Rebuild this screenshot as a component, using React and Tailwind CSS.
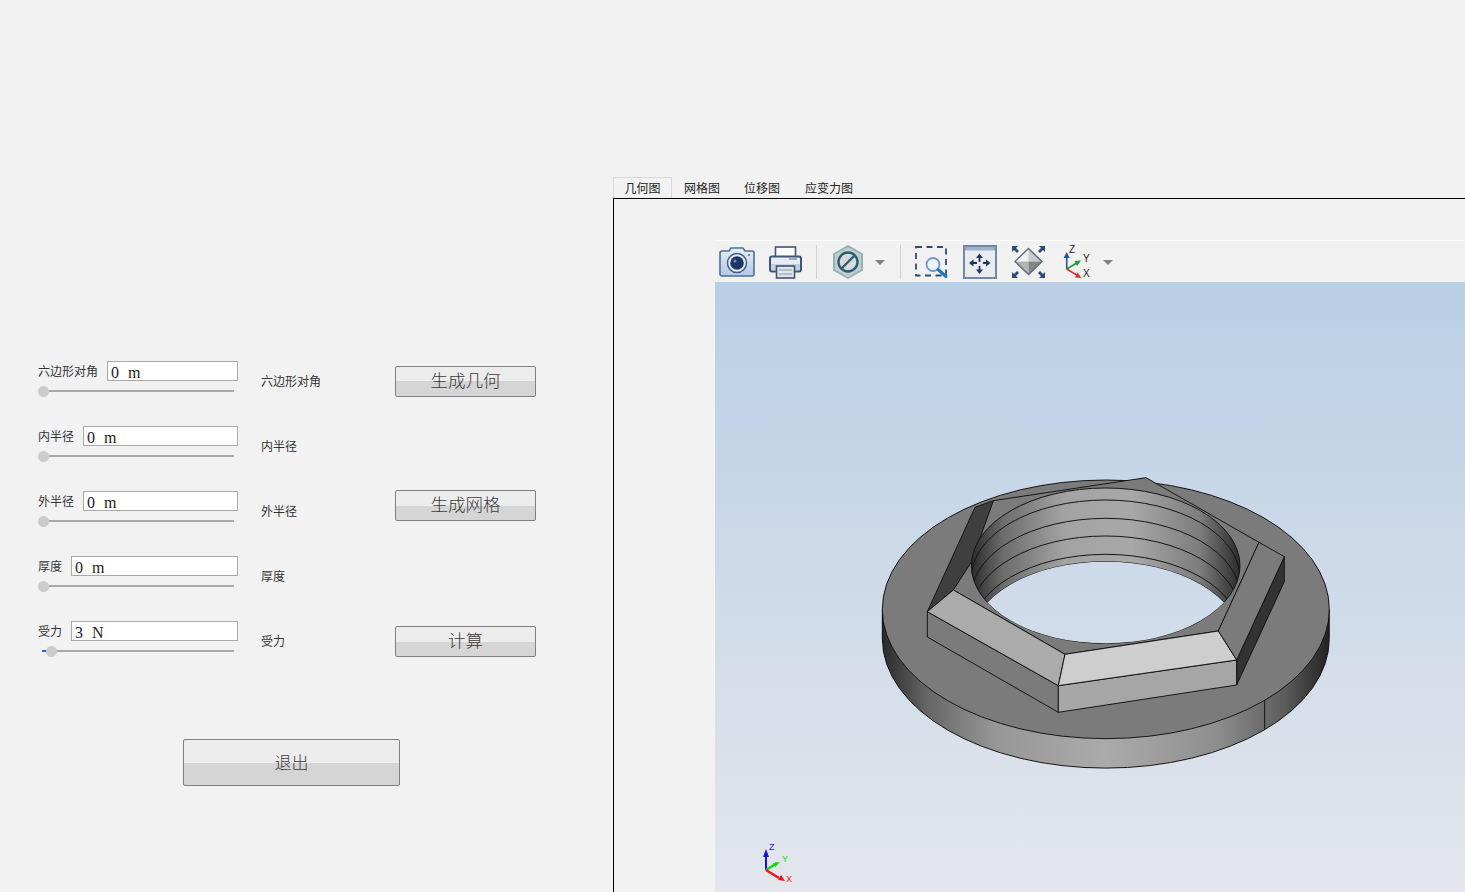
const cjk = "font-['Noto_Sans_CJK_SC','Noto_Sans',sans-serif]";

function Param({ label, value, thumb = false }) {
  return (
    <div className="h-[65px] w-[200px]">
      <div className="flex items-center gap-[9px] h-[20px]">
        <span className={`${cjk} text-[12px] leading-[20px] text-[#333] whitespace-nowrap`}>{label}</span>
        <div className="flex-1 h-[20px] bg-white border border-[#a9a9a9] pl-[3px] pt-[1px] font-['Liberation_Serif',serif] text-[16px] leading-[20px] text-[#222] [word-spacing:5px]">{value}</div>
      </div>
      <div className="relative h-[2px] mt-[9px] ml-[4px] w-[192px] bg-[#a9a9a9]">
        {thumb ? <div className="absolute left-0 top-0 h-[2px] w-[6px] bg-[#1f6fbf]" /> : null}
        <div className={`absolute top-[-4px] h-[11px] w-[11px] rounded-full bg-[#cccccc] ${thumb ? "left-[4px]" : "left-[-4px]"}`} />
      </div>
    </div>
  );
}

function Caption({ children }) {
  return (
    <div className={`${cjk} h-[65px] pt-[10px] text-[12px] leading-[20px] text-[#333] whitespace-nowrap`}>{children}</div>
  );
}

function Btn({ children, cls, text = "text-[17.5px]" }) {
  return (
    <button className={`${cjk} ${cls} ${text} font-light block rounded-[2px] border border-[#808080] pb-[2px] bg-[linear-gradient(#ececec_50%,#d5d5d5_50%)] text-[#3a3a3a]`}>{children}</button>
  );
}

function Arrow({ x = "" }) {
  return (
    <svg width="12" height="36" viewBox="0 0 12 36" className={x}>
      <path d="M1 16h10l-5 5z" fill="#808080" />
    </svg>
  );
}

function Camera() {
  return (
    <svg width="40" height="36" viewBox="717 243 40 36" className="ml-[2px]">
      <defs>
        <linearGradient id="cam" x1="0" y1="0" x2="0" y2="1"><stop offset="0" stopColor="#e6edf6" /><stop offset="1" stopColor="#b4c8e2" /></linearGradient>
      </defs>
      <path d="M729 250l2-3h12l2 3h7a2 2 0 0 1 2 2v21a2 2 0 0 1-2 2h-30a2 2 0 0 1-2-2v-21a2 2 0 0 1 2-2z" fill="url(#cam)" stroke="#4f6f96" strokeWidth="1.6" />
      <circle cx="737" cy="262" r="9.500" fill="#e8eef6" stroke="#3f5c88" strokeWidth="1.500" />
      <circle cx="737" cy="262" r="6.800" fill="#1d3768" />
      <circle cx="735" cy="260" r="1.500" fill="#6f8fc0" />
      <circle cx="749" cy="254" r="1" fill="#4f6f96" />
    </svg>
  );
}

function Printer() {
  return (
    <svg width="40" height="36" viewBox="765 243 40 36" className="ml-[8px]">
      <rect x="775.500" y="246" width="20" height="10" fill="#fff" stroke="#3f5478" strokeWidth="1.600" />
      <rect x="770" y="255.500" width="31" height="15" rx="2" fill="#e6ebf1" stroke="#3f5478" strokeWidth="2" />
      <path d="M771 263h29v6h-29z" fill="#c5d0de" />
      <rect x="776.500" y="265" width="18" height="12" fill="#dfe4ea" stroke="#3f5478" strokeWidth="1.600" />
      <path d="M779 269h13M779 273h13" stroke="#8a98ad" strokeWidth="1.200" />
      <path d="M789 258h8" stroke="#7f8ea6" strokeWidth="1.400" />
    </svg>
  );
}

function Forbid() {
  return (
    <svg width="40" height="36" viewBox="828 243 40 36" className="ml-[11px]">
      <path d="M848 245l14 8v16l-14 8-14-8v-16z" fill="#c4cdd0" stroke="#92b3b8" strokeWidth="2" strokeLinejoin="round" />
      <circle cx="848" cy="261" r="9.500" fill="#d6dcde" stroke="#2c5f6b" strokeWidth="2.400" />
      <path d="M841.500 267.500l13-13" stroke="#2c5f6b" strokeWidth="2.400" />
    </svg>
  );
}

function ZoomBox() {
  return (
    <svg width="40" height="36" viewBox="911 243 40 36" className="ml-[10px]">
      <rect x="916" y="246" width="30" height="28.500" fill="none" stroke="#2d4a78" strokeWidth="1.800" strokeDasharray="6 4.500" />
      <circle cx="933" cy="263.500" r="6.500" fill="#eef3f8" stroke="#6d9ac6" strokeWidth="1.800" />
      <path d="M938 268.500l8 7" stroke="#1a78c2" strokeWidth="3" strokeLinecap="round" />
    </svg>
  );
}

function Pan() {
  return (
    <svg width="40" height="36" viewBox="960 243 40 36" className="ml-[9px]">
      <rect x="964" y="245" width="32" height="32" fill="#e9edf2" stroke="#7488a4" strokeWidth="2" />
      <rect x="965" y="246" width="30" height="3.500" fill="#9fb2ca" />
      <path d="M979.500 256v5M979.500 265v5M973 262h4M983 262h4" stroke="#1f3a5f" strokeWidth="1.800" />
      <path d="M979.500 252.500l-3.500 4.500h7zM979.500 273l-3.500-4.500h7zM969 262l4.500-3.500v7zM990.500 262l-4.500-3.500v7z" fill="#1f3a5f" />
    </svg>
  );
}

function Fit() {
  return (
    <svg width="40" height="36" viewBox="1008 243 40 36" className="ml-[8px]">
      <path d="M1028.500 260.500V247.500L1015 260.500z" fill="#f2f2f2" />
      <path d="M1028.500 260.500V247.500L1042 260.500z" fill="#c9c9c9" />
      <path d="M1028.500 260.500V273.500L1015 260.500z" fill="#b4b4b4" />
      <path d="M1028.500 260.500V273.500L1042 260.500z" fill="#858585" />
      <path d="M1028.500 247.500L1042 260.500 1028.500 273.500 1015 260.500z" fill="none" stroke="#5a6a85" strokeWidth="1.400" />
      <path d="M1012 245h6l-2 2 3 3-2 2-3-3-2 2zM1045 245h-6l2 2-3 3 2 2 3-3 2 2zM1012 277h6l-2-2 3-3-2-2-3 3-2-2zM1045 277h-6l2-2-3-3 2-2 3 3 2-2z" fill="#2d4a78" />
    </svg>
  );
}

function Triad() {
  return (
    <svg width="40" height="36" viewBox="1058 243 40 36" className="ml-[10px]">
      <path d="M1066.700 268v-12" stroke="#2b4fa8" strokeWidth="1.600" />
      <path d="M1066.700 251l-3 6h6z" fill="#2b4fa8" />
      <path d="M1066.700 268l10-6" stroke="#1f9a3c" strokeWidth="1.600" />
      <path d="M1081 259.500l-6.500.5 2.500 5z" fill="#1f9a3c" />
      <path d="M1066.700 268l10 6" stroke="#e02b2b" strokeWidth="1.600" />
      <path d="M1081.500 277l-6.500-.5 2.500-5z" fill="#e02b2b" />
      <text x="1069" y="252" fontSize="10" fill="#222" fontFamily="Liberation Sans, sans-serif">Z</text>
      <text x="1083" y="261" fontSize="10" fill="#222" fontFamily="Liberation Sans, sans-serif">Y</text>
      <text x="1083" y="276" fontSize="10" fill="#222" fontFamily="Liberation Sans, sans-serif">X</text>
    </svg>
  );
}

function Separator({ cls }) {
  return <div className={`w-px h-[34px] bg-[#d2d2d2] ${cls}`} />;
}

function Scene() {
  const thread = [105, 160, 213, 268, 290];
  return (
    <svg viewBox="715 282 750 610" className="block w-[750px] h-[610px]">
      <defs>
        <linearGradient id="metal" gradientUnits="userSpaceOnUse" x1="37" y1="0" x2="1378" y2="0">
          <stop offset="0" stopColor="#2a2a2a" />
          <stop offset="0.1" stopColor="#666" />
          <stop offset="0.25" stopColor="#969696" />
          <stop offset="0.5" stopColor="#ababab" />
          <stop offset="0.75" stopColor="#8e8e8e" />
          <stop offset="0.9" stopColor="#5c5c5c" />
          <stop offset="1" stopColor="#222" />
        </linearGradient>
        <linearGradient id="bore" gradientUnits="userSpaceOnUse" x1="304" y1="0" x2="1110" y2="0">
          <stop offset="0" stopColor="#2b2b2b" />
          <stop offset="0.12" stopColor="#6d6d6d" />
          <stop offset="0.35" stopColor="#a3a3a3" />
          <stop offset="0.6" stopColor="#a8a8a8" />
          <stop offset="0.85" stopColor="#7d7d7d" />
          <stop offset="1" stopColor="#2b2b2b" />
        </linearGradient>
        <clipPath id="boreClip"><ellipse cx="707" cy="302" rx="403" ry="233" /></clipPath>
        <mask id="hole" maskUnits="userSpaceOnUse" x="0" y="0" width="1410" height="945">
          <rect x="0" y="0" width="1410" height="945" fill="#fff" />
          <ellipse cx="707" cy="523" rx="403" ry="233" fill="#000" clipPath="url(#boreClip)" />
        </mask>
      </defs>
      <g transform="translate(870 465) scale(0.33333)" stroke="#151515" strokeWidth="3" strokeLinejoin="round" shapeRendering="crispEdges">
        <g mask="url(#hole)">
          <path d="M37 433v88a670 388 0 0 0 1341 0v-88z" fill="url(#metal)" />
          <ellipse cx="707.500" cy="433" rx="670.500" ry="388" fill="#7b7b7b" />
          <path d="M1184 708v87" fill="none" />
          <path d="M172 440L565 662V742L172 516z" fill="#7b7b7b" />
          <path d="M565 662L1100 585V660L565 742z" fill="#a6a6a6" />
          <path d="M1243 275V350L1100 660V585z" fill="#333" />
          <path d="M250 375L370 107 828 38 1167 232 1045 498 585 568z" fill="#7b7b7b" />
          <path d="M172 440L315 127 370 107 305 290 250 375z" fill="#3f3f3f" />
          <path d="M172 440L250 375 585 568 565 662z" fill="#ababab" />
          <path d="M585 568L1045 498 1100 585 565 662z" fill="#cecece" />
          <path d="M1045 498L1167 232 1243 275 1100 585z" fill="#7b7b7b" />
          <ellipse cx="707" cy="302" rx="403" ry="233" fill="url(#bore)" />
          <g clipPath="url(#boreClip)" fill="none">
            {thread.map((t) => (
              <ellipse key={t} cx="707" cy={t + 233} rx="403" ry="233" />
            ))}
          </g>
        </g>
      </g>
      <path d="M766 870v-15" stroke="#1414e0" strokeWidth="2" />
      <path d="M766 849l-3 8h6z" fill="#1414e0" />
      <path d="M766 870l11-7" stroke="#14d814" strokeWidth="2.400" />
      <path d="M780 862l-7 1 2.500 4z" fill="#14d814" />
      <path d="M766 870l13 8" stroke="#ee1414" strokeWidth="2.400" />
      <path d="M785 881l-4-6-3 5z" fill="#ee1414" />
      <text x="769" y="850" fontSize="9" fill="#1414e0" fontFamily="Liberation Sans, sans-serif">Z</text>
      <text x="782" y="862" fontSize="9" fill="#14d814" fontFamily="Liberation Sans, sans-serif">Y</text>
      <text x="786" y="882" fontSize="9" fill="#ee1414" fontFamily="Liberation Sans, sans-serif">X</text>
    </svg>
  );
}

export default function App() {
  return (
    <div className="flex w-[1465px] h-[892px] overflow-hidden bg-[#f2f2f2]">
      <div className="w-[613px] shrink-0 pt-[361px] pl-[38px]">
        <div className="flex">
          <div className="w-[223px]">
            <Param label="六边形对角" value="0 m" />
            <Param label="内半径" value="0 m" />
            <Param label="外半径" value="0 m" />
            <Param label="厚度" value="0 m" />
            <Param label="受力" value="3 N" thumb />
          </div>
          <div className="w-[134px]">
            <Caption>六边形对角</Caption>
            <Caption>内半径</Caption>
            <Caption>外半径</Caption>
            <Caption>厚度</Caption>
            <Caption>受力</Caption>
          </div>
          <div className="pt-[5px]">
            <Btn cls="w-[141px] h-[31px]">生成几何</Btn>
            <Btn cls="w-[141px] h-[31px] mt-[93px]">生成网格</Btn>
            <Btn cls="w-[141px] h-[31px] mt-[105px]">计算</Btn>
          </div>
        </div>
        <Btn cls="w-[217px] h-[47px] mt-[53px] ml-[145px]" text="text-[17px]">退出</Btn>
      </div>
      <div className="flex-1 min-w-0 pt-[177px]">
        <div className={`${cjk} flex h-[21px] text-[12px] text-[#222]`}>
          <div className="w-[59px] border border-b-0 border-[#d9d9d9] text-center leading-[19px]">几何图</div>
          <div className="w-[60px] text-center leading-[21px]">网格图</div>
          <div className="w-[60px] text-center leading-[21px]">位移图</div>
          <div className="w-[74px] text-center leading-[21px]">应变力图</div>
        </div>
        <div className="h-[694px] border-t border-l border-black pt-[41px] pl-[101px]">
          <div className="flex items-center h-[42px] border-t border-[#fafafa] bg-[#f1f1f1]">
            <Camera />
            <Printer />
            <Separator cls="ml-[11px]" />
            <Forbid />
            <Arrow x="ml-[6px]" />
            <Separator cls="ml-[14px]" />
            <ZoomBox />
            <Pan />
            <Fit />
            <Triad />
            <Arrow x="ml-[4px]" />
          </div>
          <div className="h-[610px] bg-[linear-gradient(#b9cfe6,#e4e6ec)]">
            <Scene />
          </div>
        </div>
      </div>
    </div>
  );
}
